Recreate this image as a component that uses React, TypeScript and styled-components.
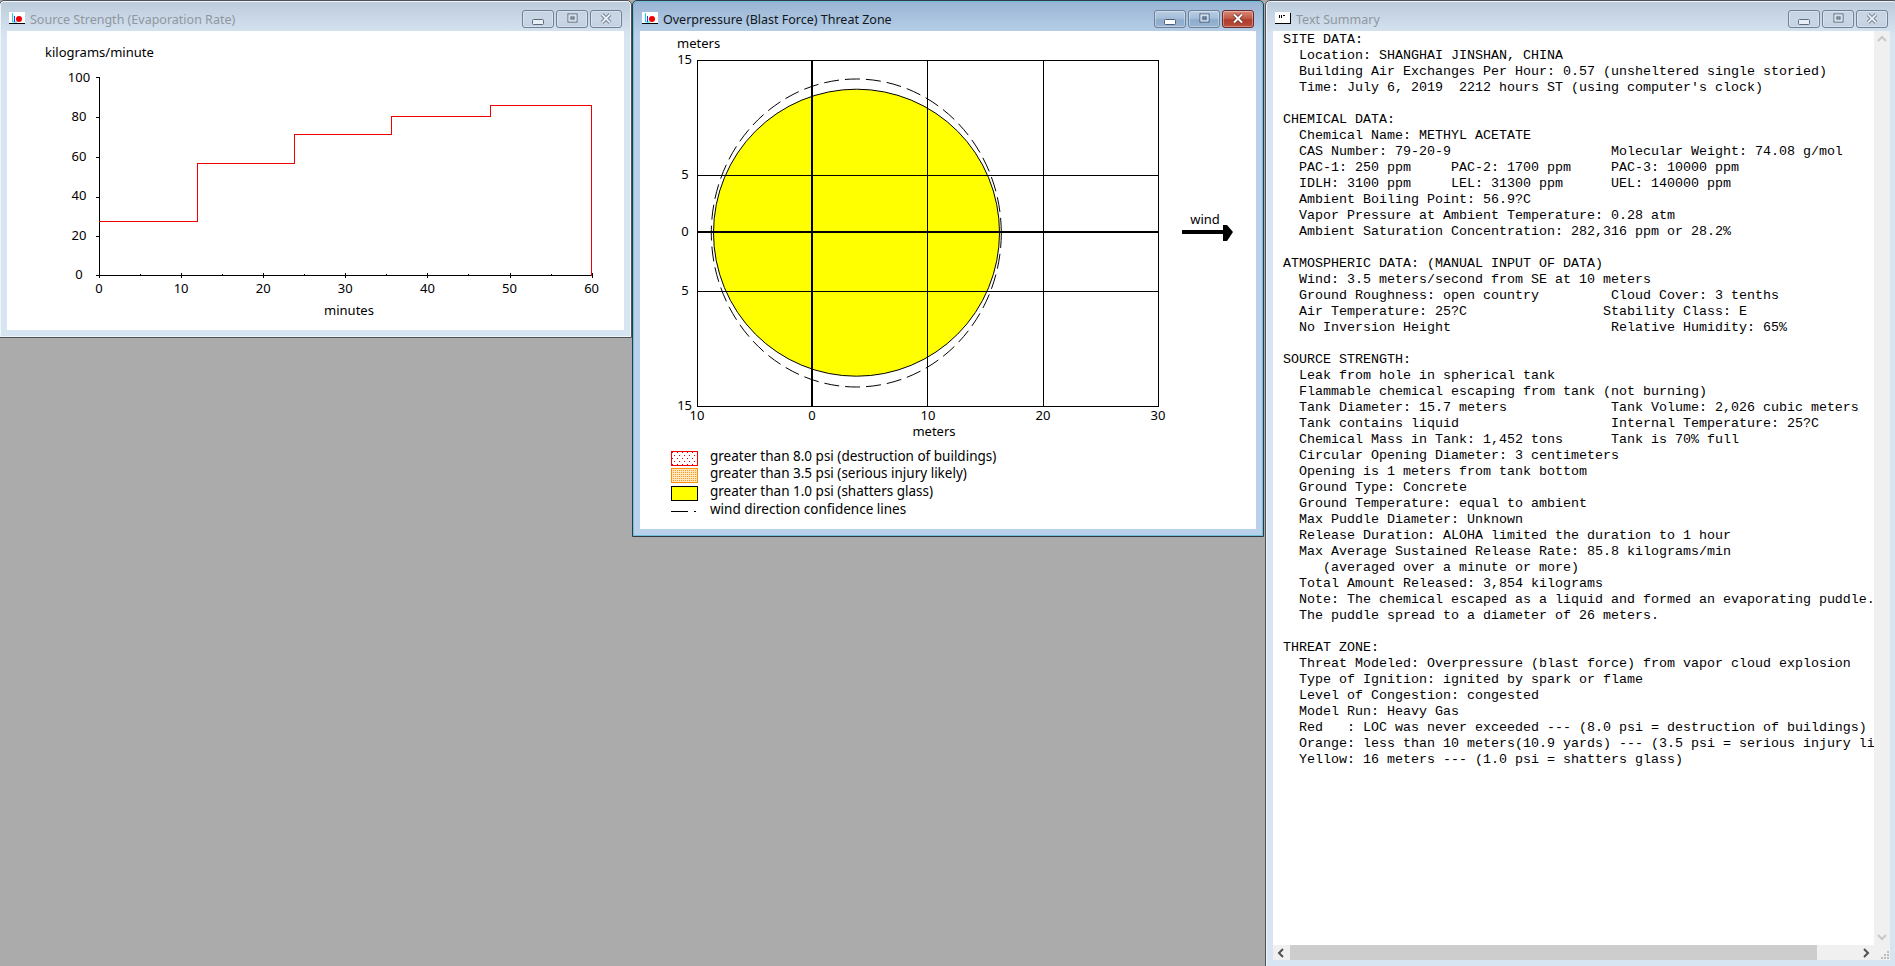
import React from "react";
import styled, { createGlobalStyle } from "styled-components";

const Global = createGlobalStyle`
  html, body { margin: 0; padding: 0; height: 100%; overflow: hidden; background: #ababab; }
  #root { height: 100%; }
`;

const Desktop = styled.main`
  position: relative;
  width: 100vw;
  height: 100vh;
  overflow: hidden;
  background: #ababab;
  font-family: "Noto Sans", "Liberation Sans", sans-serif;
`;

const Win = styled.section<{ $left: number; $width: number; $height: number; $active?: boolean }>`
  position: absolute;
  top: 0;
  left: ${(p) => p.$left}px;
  width: ${(p) => p.$width}px;
  height: ${(p) => p.$height}px;
  box-sizing: border-box;
  display: flex;
  flex-direction: column;
  padding: 0 7px 7px;
  border: 1px solid ${(p) => (p.$active ? "#2f3a44" : "#4d5257")};
  border-radius: 5px 5px 0 0;
  box-shadow: inset 0 0 0 1px ${(p) => (p.$active ? "#6fc0dc" : "#f0f5fa")};
  background: ${(p) =>
    p.$active
      ? "linear-gradient(180deg, #98b3d2 0, #b9d1ea 34px)"
      : "linear-gradient(180deg, #bccbdb 0, #d7e4f2 34px)"};
`;

const TitleBar = styled.header`
  flex: none;
  height: 30px;
  display: flex;
  align-items: flex-start;
`;

const TitleIcon = styled.svg`
  flex: none;
  width: 16px;
  height: 13px;
  margin: 11px 5px 0 2px;
`;

const TitleText = styled.h1<{ $active?: boolean }>`
  margin: 11px 0 0;
  font-size: 12.5px;
  line-height: 16px;
  font-weight: 400;
  white-space: nowrap;
  color: ${(p) => (p.$active ? "#10161c" : "#8f979f")};
`;

const Controls = styled.div`
  display: flex;
  gap: 2px;
  margin: 9px 2px 0 auto;
`;

const Control = styled.div<{ $active?: boolean; $close?: boolean }>`
  width: 32px;
  height: 18px;
  box-sizing: border-box;
  display: flex;
  align-items: center;
  justify-content: center;
  border-radius: 3px;
  border: 1px solid ${(p) => (p.$close && p.$active ? "#6b2a2a" : "#6f8197")};
  box-shadow: inset 0 0 0 1px rgba(255, 255, 255, 0.35);
  background: ${(p) =>
    p.$close && p.$active
      ? "linear-gradient(180deg, #d9897a 0, #c25a48 45%, #b03c2b 55%, #b8503f 100%)"
      : p.$active
      ? "linear-gradient(180deg, #b9cde3 0, #a6bed9 45%, #8eaccd 55%, #97b4d2 100%)"
      : "linear-gradient(180deg, #c6d3e2 0, #c9d6e5 50%, #c2d1e2 100%)"};
`;

const Client = styled.div`
  flex: 1;
  min-height: 0;
  background: #fff;
  display: flex;
  flex-direction: column;
`;

const Plot = styled.svg`
  display: block;
  flex: none;
  text {
    font-family: "Noto Sans", "Liberation Sans", sans-serif;
    font-size: 13px;
    fill: #000;
    dominant-baseline: central;
    transform: translateY(-1px);
  }
  line, polyline, rect {
    shape-rendering: crispEdges;
  }
`;

const Legend = styled.ul`
  list-style: none;
  margin: 1px 0 0;
  padding: 0 0 0 31px;
  display: flex;
  flex-direction: column;
`;

const LegendRow = styled.li`
  height: 17.6px;
  display: flex;
  align-items: center;
  font-size: 13.5px;
  color: #000;
  white-space: nowrap;
`;

const LegendMark = styled.svg`
  flex: none;
  width: 27px;
  height: 15px;
  margin: 5px 12px 0 0;
`;

const Pane = styled.div`
  flex: 1;
  min-height: 0;
  display: grid;
  grid-template-columns: minmax(0, 1fr) 16px;
  grid-template-rows: minmax(0, 1fr) 15px;
`;

const Report = styled.pre`
  margin: 0;
  padding: 1px 0 0 10px;
  overflow: hidden;
  background: #fff;
  color: #000;
  font-family: "Liberation Mono", monospace;
  font-size: 13.333px;
  line-height: 16px;
`;

const VTrack = styled.div`
  background: #f0f0f0;
  display: flex;
  flex-direction: column;
  align-items: center;
  justify-content: space-between;
  padding: 4px 0;
`;

const HTrack = styled.div`
  background: #f0f0f0;
  display: flex;
  align-items: center;
`;

const ArrowCell = styled.div<{ $end?: boolean }>`
  flex: none;
  width: 17px;
  height: 15px;
  display: flex;
  align-items: center;
  justify-content: center;
  margin-left: ${(p) => (p.$end ? "auto" : "0")};
`;

const Thumb = styled.div`
  flex: none;
  width: 527px;
  height: 15px;
  background: #cdcdcd;
`;

const Corner = styled.div`
  background: #f0f0f0;
  display: flex;
  align-items: flex-end;
  justify-content: flex-end;
`;

const Chevron = ({ dir, color }: { dir: "up" | "down" | "left" | "right"; color: string }) => {
  const d = {
    up: "M1 6 L5 2 L9 6",
    down: "M1 2 L5 6 L9 2",
    left: "M6 1 L2 5 L6 9",
    right: "M3 1 L7 5 L3 9",
  }[dir];
  const horiz = dir === "left" || dir === "right";
  return (
    <svg width={horiz ? 9 : 10} height={horiz ? 10 : 8} viewBox={horiz ? "0 0 9 10" : "0 0 10 8"}>
      <path d={d} fill="none" stroke={color} strokeWidth="2" />
    </svg>
  );
};

const Grip = () => (
  <svg width="10" height="10" viewBox="0 0 10 10">
    {[[7, 1], [4, 4], [7, 4], [1, 7], [4, 7], [7, 7]].map(([x, y]) => (
      <rect key={`${x}-${y}`} x={x} y={y} width="2" height="2" fill="#bdbdbd" />
    ))}
  </svg>
);

const ChartIcon = () => (
  <TitleIcon viewBox="0 0 16 13">
    <rect x="0" y="0" width="16" height="12" fill="#fff" />
    <path d="M3.5 1 V10 H8" fill="none" stroke="#12d8e8" strokeWidth="1" />
    <path d="M5.5 4 V10" stroke="#3030ff" strokeWidth="1" />
    <circle cx="10" cy="7" r="3" fill="#f00000" />
    <rect x="0" y="11" width="16" height="1" fill="#000" />
  </TitleIcon>
);

const TextIcon = () => (
  <TitleIcon viewBox="0 0 16 13">
    <rect x="0" y="0" width="15" height="11" fill="#fff" />
    <rect x="0" y="11" width="16" height="1" fill="#000" />
    <rect x="15" y="1" width="1" height="11" fill="#000" />
    <rect x="4" y="3" width="1" height="3" fill="#000" />
    <rect x="6" y="3" width="1" height="3" fill="#000" />
    <rect x="8" y="3" width="2" height="1" fill="#000" />
  </TitleIcon>
);

const MinGlyph = styled.svg`
  margin-top: 5px;
`;
const MaxGlyph = styled.svg`
  margin-top: -3px;
`;
const CloseGlyph = styled.svg`
  margin-top: -2px;
`;

const WindowControls = ({ active }: { active?: boolean }) => (
  <Controls>
    <Control $active={active}>
      <MinGlyph width="12" height="6" viewBox="0 0 12 6">
        <rect x="0.5" y="0.5" width="11" height="5" rx="1" fill={active ? "#fff" : "#e8eef5"} stroke={active ? "#4c5f78" : "#5e6a78"} />
      </MinGlyph>
    </Control>
    <Control $active={active}>
      <MaxGlyph width="11" height="10" viewBox="0 0 11 10">
        <rect x="1" y="1" width="9" height="8" fill="none" stroke={active ? "#45566d" : "#55606e"} strokeWidth="1" />
        <rect x="2" y="2" width="7" height="6" fill="none" stroke={active ? "#e8f0f8" : "#dfe7f0"} strokeWidth="1" />
        <rect x="4" y="4" width="3" height="2" fill="none" stroke={active ? "#45566d" : "#55606e"} strokeWidth="1" />
      </MaxGlyph>
    </Control>
    <Control $active={active} $close>
      <CloseGlyph width="12" height="11" viewBox="0 0 12 11">
        <path d="M2 1.5 L10 9.5 M10 1.5 L2 9.5" fill="none" stroke={active ? "#6a2a22" : "#5e6a78"} strokeWidth="3.6" />
        <path d="M2 1.5 L10 9.5 M10 1.5 L2 9.5" fill="none" stroke={active ? "#fff" : "#e8eef5"} strokeWidth="2" />
      </CloseGlyph>
    </Control>
  </Controls>
);

/* Source strength chart */
const SourceChart = () => {
  const x0 = 99.5, y0 = 275.5, pxX = 82.1;
  const yTicks = [[0, 275, 275], [20, 236, 236], [40, 197, 196], [60, 157, 157], [80, 117, 117], [100, 77, 78]];
  const step = "99,221.5 197.5,221.5 197.5,163.5 294.5,163.5 294.5,134.5 391.5,134.5 391.5,116.5 490.5,116.5 490.5,105.5 591.5,105.5 591.5,275.5";
  return (
    <Plot width="617" height="299" viewBox="7 31 617 299">
      <text x="45" y="53">kilograms/minute</text>
      <line x1={x0} y1="77" x2={x0} y2={y0} stroke="#000" />
      <line x1={x0} y1={y0} x2="592.5" y2={y0} stroke="#000" />
      {yTicks.map(([v, t, l]) => (
        <g key={v}>
          <line x1="96" x2={x0} y1={t + 0.5} y2={t + 0.5} stroke="#000" />
          <text x="79" y={l} textAnchor="middle">{v}</text>
        </g>
      ))}
      {Array.from({ length: 13 }, (_, i) => {
        const x = Math.round(99 + (i * pxX) / 2) + 0.5;
        return <line key={i} x1={x} x2={x} y1={i % 2 ? 274 : 273} y2={i % 2 ? 276 : 278} stroke="#000" />;
      })}
      {[0, 10, 20, 30, 40, 50, 60].map((v, i) => (
        <text key={v} x={99 + i * pxX} y="289" textAnchor="middle">{v}</text>
      ))}
      <text x="349" y="311" textAnchor="middle">minutes</text>
      <polyline points={step} fill="none" stroke="#f00000" />
    </Plot>
  );
};

/* Threat zone plot */
const ThreatPlot = () => (
  <Plot width="616" height="415" viewBox="640 31 616 415">
    <text x="677" y="44">meters</text>
    <ellipse cx="856.5" cy="232.7" rx="143" ry="143.5" fill="#ffff00" stroke="#000" />
    <ellipse cx="856.3" cy="233" rx="145" ry="154" fill="none" stroke="#000" strokeDasharray="15 6" />
    <rect x="697.5" y="60.5" width="461" height="346" fill="none" stroke="#000" />
    <line x1="927.5" x2="927.5" y1="61" y2="406" stroke="#000" />
    <line x1="1043.5" x2="1043.5" y1="61" y2="406" stroke="#000" />
    <line x1="697" x2="1158" y1="175.5" y2="175.5" stroke="#000" />
    <line x1="697" x2="1158" y1="291.5" y2="291.5" stroke="#000" />
    <rect x="811" y="61" width="2" height="345" fill="#000" />
    <rect x="697" y="231" width="461" height="2" fill="#000" />
    <text x="692" y="60" textAnchor="end">15</text>
    <text x="685" y="175" textAnchor="middle">5</text>
    <text x="685" y="232" textAnchor="middle">0</text>
    <text x="685" y="291" textAnchor="middle">5</text>
    <text x="692" y="406" textAnchor="end">15</text>
    {[[697, 10], [812, 0], [928, 10], [1043, 20], [1158, 30]].map(([x, v]) => (
      <text key={x} x={x} y="416" textAnchor="middle">{v}</text>
    ))}
    <text x="934" y="432" textAnchor="middle">meters</text>
    <text x="1205" y="220" textAnchor="middle">wind</text>
    <rect x="1182" y="230" width="42" height="4" fill="#000" />
    <path d="M1223 225 L1227 225 L1233 232 L1227 241 L1223 241 Z" fill="#000" />
  </Plot>
);

const RedMark = () => (
  <LegendMark viewBox="0 0 27 15">
    <defs>
      <pattern id="redDots" width="5" height="6" patternUnits="userSpaceOnUse">
        <rect x="1" y="1" width="1" height="1" fill="#f00000" />
        <rect x="3" y="4" width="1" height="1" fill="#f00000" />
      </pattern>
    </defs>
    <rect x="0.5" y="0.5" width="26" height="14" fill="#fff" />
    <rect x="0.5" y="0.5" width="26" height="14" fill="url(#redDots)" stroke="#f00000" shapeRendering="crispEdges" />
  </LegendMark>
);

const OrangeMark = () => (
  <LegendMark viewBox="0 0 27 15">
    <defs>
      <pattern id="orangeDots" width="2" height="2" patternUnits="userSpaceOnUse">
        <rect width="2" height="2" fill="#ffe7c4" />
        <rect width="1" height="1" fill="#ff9a18" />
      </pattern>
    </defs>
    <rect x="0.5" y="0.5" width="26" height="14" fill="url(#orangeDots)" stroke="#ff9000" shapeRendering="crispEdges" />
  </LegendMark>
);

const YellowMark = () => (
  <LegendMark viewBox="0 0 27 15">
    <rect x="0.5" y="0.5" width="26" height="14" fill="#ffff00" stroke="#000" shapeRendering="crispEdges" />
  </LegendMark>
);

const LineMark = () => (
  <LegendMark viewBox="0 0 27 15">
    <line x1="0" x2="17" y1="7.5" y2="7.5" stroke="#000" shapeRendering="crispEdges" />
    <line x1="23" x2="25" y1="7.5" y2="7.5" stroke="#000" shapeRendering="crispEdges" />
  </LegendMark>
);

const cols = (...parts: [string, number][]) =>
  parts.map(([t, n]) => (n ? t.padEnd(n) : t)).join("");

const report = [
  "SITE DATA:",
  "  Location: SHANGHAI JINSHAN, CHINA",
  "  Building Air Exchanges Per Hour: 0.57 (unsheltered single storied)",
  "  Time: July 6, 2019  2212 hours ST (using computer's clock)",
  "",
  "CHEMICAL DATA:",
  "  Chemical Name: METHYL ACETATE",
  cols(["  CAS Number: 79-20-9", 41], ["Molecular Weight: 74.08 g/mol", 0]),
  cols(["  PAC-1: 250 ppm", 21], ["PAC-2: 1700 ppm", 20], ["PAC-3: 10000 ppm", 0]),
  cols(["  IDLH: 3100 ppm", 21], ["LEL: 31300 ppm", 20], ["UEL: 140000 ppm", 0]),
  "  Ambient Boiling Point: 56.9?C",
  "  Vapor Pressure at Ambient Temperature: 0.28 atm",
  "  Ambient Saturation Concentration: 282,316 ppm or 28.2%",
  "",
  "ATMOSPHERIC DATA: (MANUAL INPUT OF DATA)",
  "  Wind: 3.5 meters/second from SE at 10 meters",
  cols(["  Ground Roughness: open country", 41], ["Cloud Cover: 3 tenths", 0]),
  cols(["  Air Temperature: 25?C", 40], ["Stability Class: E", 0]),
  cols(["  No Inversion Height", 41], ["Relative Humidity: 65%", 0]),
  "",
  "SOURCE STRENGTH:",
  "  Leak from hole in spherical tank",
  "  Flammable chemical escaping from tank (not burning)",
  cols(["  Tank Diameter: 15.7 meters", 41], ["Tank Volume: 2,026 cubic meters", 0]),
  cols(["  Tank contains liquid", 41], ["Internal Temperature: 25?C", 0]),
  cols(["  Chemical Mass in Tank: 1,452 tons", 41], ["Tank is 70% full", 0]),
  "  Circular Opening Diameter: 3 centimeters",
  "  Opening is 1 meters from tank bottom",
  "  Ground Type: Concrete",
  "  Ground Temperature: equal to ambient",
  "  Max Puddle Diameter: Unknown",
  "  Release Duration: ALOHA limited the duration to 1 hour",
  "  Max Average Sustained Release Rate: 85.8 kilograms/min",
  "     (averaged over a minute or more)",
  "  Total Amount Released: 3,854 kilograms",
  "  Note: The chemical escaped as a liquid and formed an evaporating puddle.",
  "  The puddle spread to a diameter of 26 meters.",
  "",
  "THREAT ZONE:",
  "  Threat Modeled: Overpressure (blast force) from vapor cloud explosion",
  "  Type of Ignition: ignited by spark or flame",
  "  Level of Congestion: congested",
  "  Model Run: Heavy Gas",
  "  Red   : LOC was never exceeded --- (8.0 psi = destruction of buildings)",
  "  Orange: less than 10 meters(10.9 yards) --- (3.5 psi = serious injury likely)",
  "  Yellow: 16 meters --- (1.0 psi = shatters glass)",
].join("\n");

export default function App() {
  return (
    <Desktop>
      <Global />
      <Win $left={-1} $width={633} $height={338}>
        <TitleBar>
          <ChartIcon />
          <TitleText>Source Strength (Evaporation Rate)</TitleText>
          <WindowControls />
        </TitleBar>
        <Client>
          <SourceChart />
        </Client>
      </Win>

      <Win $left={632} $width={632} $height={537} $active>
        <TitleBar>
          <ChartIcon />
          <TitleText $active>Overpressure (Blast Force) Threat Zone</TitleText>
          <WindowControls active />
        </TitleBar>
        <Client>
          <ThreatPlot />
          <Legend>
            <LegendRow><RedMark />greater than 8.0 psi (destruction of buildings)</LegendRow>
            <LegendRow><OrangeMark />greater than 3.5 psi (serious injury likely)</LegendRow>
            <LegendRow><YellowMark />greater than 1.0 psi (shatters glass)</LegendRow>
            <LegendRow><LineMark />wind direction confidence lines</LegendRow>
          </Legend>
        </Client>
      </Win>

      <Win $left={1265} $width={633} $height={968}>
        <TitleBar>
          <TextIcon />
          <TitleText>Text Summary</TitleText>
          <WindowControls />
        </TitleBar>
        <Client>
          <Pane>
            <Report>{report}</Report>
            <VTrack>
              <Chevron dir="up" color="#c8c8c8" />
              <Chevron dir="down" color="#c8c8c8" />
            </VTrack>
            <HTrack>
              <ArrowCell><Chevron dir="left" color="#505050" /></ArrowCell>
              <Thumb />
              <ArrowCell $end><Chevron dir="right" color="#505050" /></ArrowCell>
            </HTrack>
            <Corner><Grip /></Corner>
          </Pane>
        </Client>
      </Win>
    </Desktop>
  );
}
